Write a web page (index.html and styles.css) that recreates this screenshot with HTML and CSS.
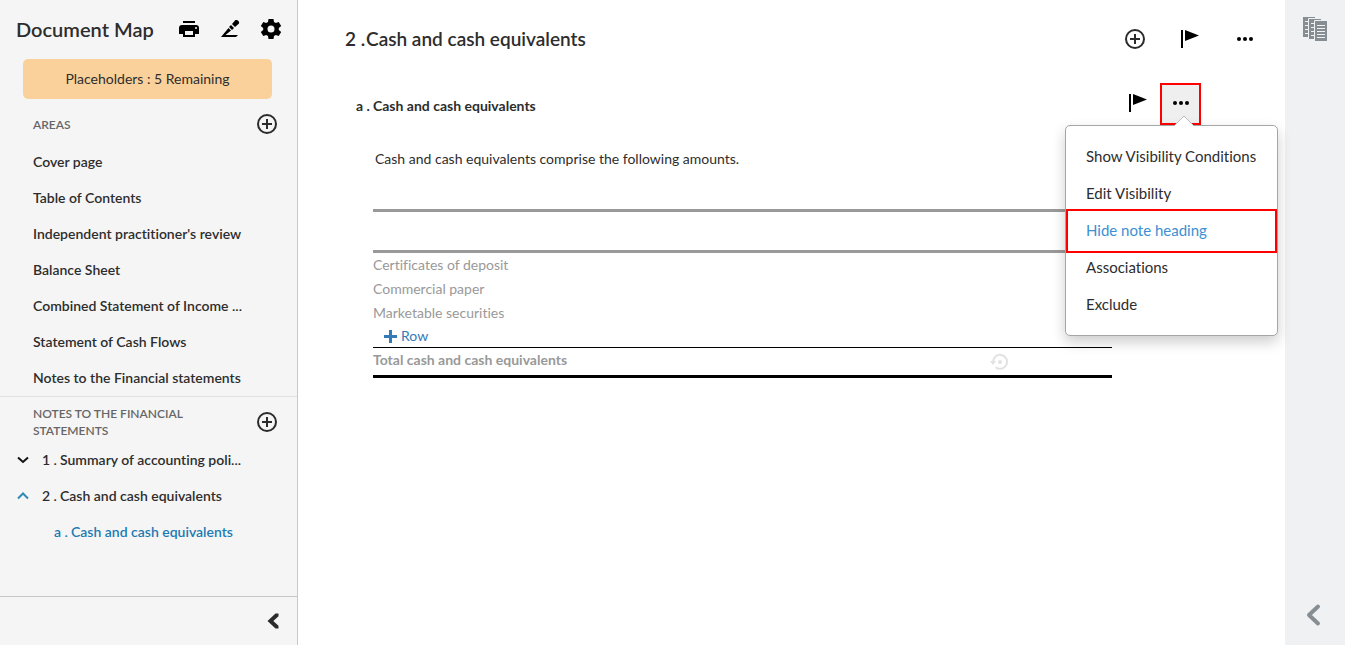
FILE: index.html
```html
<!DOCTYPE html>
<html lang="en">
<head>
<meta charset="utf-8">
<title>Document Map</title>
<link rel="stylesheet" href="styles.css">
</head>
<body>
<svg class="sprite" aria-hidden="true">
  <symbol id="plus" viewBox="0 0 24 24"><circle cx="12" cy="12" r="9" fill="none" stroke="#2b2b2b" stroke-width="2"/><path d="M12 7v10M7 12h10" stroke="#2b2b2b" stroke-width="2"/></symbol>
  <symbol id="flag" viewBox="0 0 18 18"><path d="M0 0h2v18H0zM4 0l14 5.500L4 11z"/></symbol>
  <symbol id="dots" viewBox="0 0 18 6"><circle cx="3" cy="3" r="2"/><circle cx="9" cy="3" r="2"/><circle cx="15" cy="3" r="2"/></symbol>
</svg>
<div class="app">
  <aside class="sidebar">
    <header class="map-head">
      <h1 class="map-title">Document Map</h1>
      <div class="map-tools">
        <button class="icon-btn" aria-label="Print"><svg width="24" height="24" viewBox="0 0 24 24"><path d="M6 4h12v2H6z"/><path fill-rule="evenodd" d="M5 8h14a3 3 0 0 1 3 3v6h-4v3H6v-3H2v-6a3 3 0 0 1 3-3zm3 6v4h8v-4zm11-4a1 1 0 1 0 0 2 1 1 0 0 0 0-2z"/></svg></button>
        <button class="icon-btn" aria-label="Sign"><svg width="24" height="24" viewBox="0 0 24 24"><path d="M3 20l7.500-9 2.500 2.500-5.500 4.500H20l-2 2zM11 10l2-2 3 3-2 2zM14 7l3-3.500c1-1.300 5 .5 4 3L17 10z"/></svg></button>
        <button class="icon-btn" aria-label="Settings"><svg width="24" height="24" viewBox="0 0 24 24"><path fill-rule="evenodd" d="M9.500 2h5l.5 3 1.800 1 2.900-1.100 2.500 4.200-2.400 1.900v2l2.400 1.900-2.500 4.200-2.900-1.100-1.800 1-.5 3h-5L9 19l-1.800-1-2.900 1.100-2.500-4.200L4.200 13v-2L1.800 9.100l2.500-4.200L7.200 6 9 5zM12 8.500a3.500 3.500 0 1 0 0 7 3.500 3.500 0 0 0 0-7z"/></svg></button>
      </div>
    </header>
    <button class="placeholders">Placeholders : 5 Remaining</button>
    <section class="areas">
      <div class="group-head">
        <h2 class="group-title">AREAS</h2>
        <button class="icon-btn" aria-label="Add area"><svg width="24" height="24"><use href="#plus"/></svg></button>
      </div>
      <nav class="area-list">
        <a class="nav-item" href="#">Cover page</a>
        <a class="nav-item" href="#">Table of Contents</a>
        <a class="nav-item" href="#">Independent practitioner's review</a>
        <a class="nav-item" href="#">Balance Sheet</a>
        <a class="nav-item" href="#">Combined Statement of Income ...</a>
        <a class="nav-item" href="#">Statement of Cash Flows</a>
        <a class="nav-item" href="#">Notes to the Financial statements</a>
      </nav>
    </section>
    <section class="notes">
      <div class="group-head group-head-tall">
        <h2 class="group-title">NOTES TO THE FINANCIAL STATEMENTS</h2>
        <button class="icon-btn" aria-label="Add note"><svg width="24" height="24"><use href="#plus"/></svg></button>
      </div>
      <nav class="note-list">
        <a class="note-item" href="#"><svg class="caret" width="12" height="8" viewBox="0 0 12 8"><path d="M1 1.500l5 4.500 5-4.500" fill="none" stroke="#111" stroke-width="2"/></svg><span class="num">1 .</span>Summary of accounting poli...</a>
        <a class="note-item" href="#"><svg class="caret" width="12" height="8" viewBox="0 0 12 8"><path d="M1 6.500l5-5 5 5" fill="none" stroke="#3089b3" stroke-width="2"/></svg><span class="num">2 .</span>Cash and cash equivalents</a>
        <a class="note-item note-child" href="#"><span class="num">a .</span>Cash and cash equivalents</a>
      </nav>
    </section>
    <footer class="map-foot">
      <button class="icon-btn" aria-label="Collapse map"><svg width="24" height="24" viewBox="0 0 24 24"><path d="M14.500 4.500h3v2.800L12.300 12l5.200 4.700v2.800h-3L6.500 12z" fill="#2b2b2b"/></svg></button>
    </footer>
  </aside>

  <main class="content">
    <div class="note-head">
      <h2 class="note-title"><span class="note-num">2 .</span>Cash and cash equivalents</h2>
      <div class="note-tools">
        <button class="tool" aria-label="Add"><svg width="24" height="24"><use href="#plus"/></svg></button>
        <button class="tool" aria-label="Flag"><svg width="18" height="18"><use href="#flag"/></svg></button>
        <button class="tool" aria-label="More"><svg width="18" height="6"><use href="#dots"/></svg></button>
      </div>
    </div>
    <div class="sub-head">
      <h3 class="sub-title"><span class="sub-num">a .</span>Cash and cash equivalents</h3>
      <div class="sub-tools">
        <button class="sub-flag" aria-label="Flag"><svg width="18" height="18"><use href="#flag"/></svg></button>
        <div class="more">
          <button class="more-btn" aria-label="More" aria-expanded="true"><svg width="18" height="6"><use href="#dots"/></svg></button>
          <svg class="pointer" width="20" height="11" viewBox="0 0 20 11"><path d="M0 11L10 1l10 10z" fill="#fff"/><path d="M0 11L10 1l10 10" fill="none" stroke="#bbb"/></svg>
          <div class="menu">
            <button class="menu-item">Show Visibility Conditions</button>
            <button class="menu-item">Edit Visibility</button>
            <button class="menu-item menu-current">Hide note heading</button>
            <button class="menu-item">Associations</button>
            <button class="menu-item">Exclude</button>
          </div>
        </div>
      </div>
    </div>
    <p class="lead">Cash and cash equivalents comprise the following amounts.</p>
    <table class="amounts">
      <thead><tr class="blank"><th></th><th></th></tr></thead>
      <tbody>
        <tr><td>Certificates of deposit</td><td></td></tr>
        <tr><td>Commercial paper</td><td></td></tr>
        <tr><td>Marketable securities</td><td></td></tr>
        <tr class="add"><td><button class="add-row"><svg width="13" height="13" viewBox="0 0 13 13"><path d="M5 0h3v5h5v3H8v5H5V8H0V5h5z"/></svg>Row</button></td><td></td></tr>
      </tbody>
      <tfoot><tr class="total"><th scope="row">Total cash and cash equivalents</th><td class="history"><svg width="18" height="18" viewBox="0 0 18 18"><path d="M3 9a7 7 0 1 1 2.500 5.200" fill="none" stroke="#e2e2e2" stroke-width="2"/><path d="M0 8h6l-3 4z" fill="#e2e2e2"/><circle cx="10" cy="9" r="2" fill="#e2e2e2"/></svg></td></tr></tfoot>
    </table>
  </main>

  <aside class="rail">
    <button class="icon-btn" aria-label="Documents"><svg width="24" height="24" viewBox="0 0 24 24"><g fill="#868e94" stroke="#eff1f3"><path d="M-.5-.5h13v21h-13z"/><path d="M5.500 1.500h13v21h-13z"/><path d="M11.500 3.500h13v21h-13z"/></g><path d="M2 4.500h3M2 8.500h3M2 12.500h3M2 16.500h3M8 6.500h3M8 10.500h3M8 14.500h3M8 18.500h3M14 8.500h8M14 11.500h8M14 14.500h8M14 17.500h8M14 20.500h8" stroke="#eff1f3"/></svg></button>
    <button class="icon-btn" aria-label="Expand panel"><svg width="24" height="24" viewBox="0 0 24 24"><path d="M15 3.500L6 12l9 8.500" fill="none" stroke="#868e94" stroke-width="4" stroke-linecap="round" stroke-linejoin="round"/></svg></button>
  </aside>
</div>
</body>
</html>
```

FILE: styles.css
```css
* { box-sizing: border-box; }
body {
  margin: 0;
  font: 14px/20px Lato, "Open Sans", sans-serif;
  font-variant-ligatures: none;
  color: #2d2d2d;
  background: #fff;
}
h1, h2, h3, p { margin: 0; }
button {
  padding: 0;
  border: 0;
  background: none;
  font: inherit;
  font-variant-ligatures: none;
  color: inherit;
  cursor: pointer;
}
a { color: inherit; text-decoration: none; }
svg { display: block; flex: none; }
.sprite { position: absolute; width: 0; height: 0; }
.app { display: flex; min-height: 100vh; }

.sidebar {
  flex: 0 0 298px;
  display: flex;
  flex-direction: column;
  background: #f5f5f5;
  border-right: 1px solid #c8c8c8;
}
.map-head {
  display: flex;
  align-items: center;
  justify-content: space-between;
  height: 59px;
  padding: 0 14px 2px 16px;
}
.map-title { font-size: 20px; font-weight: 600; line-height: 24px; }
.map-tools { display: flex; gap: 17px; }
.placeholders {
  height: 40px;
  margin: 0 25px 0 23px;
  border-radius: 5px;
  background: #fbd19b;
}
.group-head {
  display: flex;
  align-items: center;
  justify-content: space-between;
  height: 45px;
  padding: 5px 18px 0 33px;
}
.group-title {
  max-width: 180px;
  font-size: 12px;
  font-weight: 600;
  line-height: 17px;
  color: #666;
}
.nav-item, .note-item {
  display: flex;
  align-items: center;
  height: 36px;
  padding-left: 33px;
  font-weight: 600;
  white-space: nowrap;
}
.notes { border-top: 1px solid #e1e1e1; }
.notes .group-head { padding-top: 4px; }
.note-item { padding-left: 17px; }
.caret { margin-right: 13px; }
.num { width: 18px; }
.note-child { padding-left: 54px; color: #1c7ab2; }
.note-child .num { width: 17px; }
.map-foot {
  display: flex;
  align-items: center;
  justify-content: flex-end;
  height: 49px;
  margin-top: auto;
  padding-right: 12px;
  border-top: 1px solid #c8c8c8;
}

.content { flex: 1; min-width: 0; }
.note-head {
  display: flex;
  align-items: center;
  justify-content: space-between;
  height: 78px;
  padding: 0 13px 0 47px;
}
.note-title { display: flex; font-size: 19px; line-height: 24px; font-weight: 600; }
.note-num { width: 21px; }
.note-tools { display: flex; }
.tool { display: grid; place-items: center; width: 55px; height: 40px; }
.sub-head {
  display: flex;
  align-items: center;
  justify-content: space-between;
  height: 52px;
  padding: 0 84px 0 58px;
}
.sub-title { display: flex; padding-top: 4px; font-size: 14px; line-height: 20px; }
.sub-num { width: 17px; }
.sub-tools { display: flex; align-items: center; gap: 13px; }
.sub-flag { padding-bottom: 2px; }
.more { position: relative; }
.more-btn {
  display: grid;
  place-items: center;
  width: 41px;
  height: 42px;
  padding-bottom: 2px;
  border: 2px solid #f00;
  background: #efefef;
}
.pointer { position: absolute; z-index: 2; right: 7px; bottom: -1px; }
.menu {
  position: absolute;
  z-index: 1;
  top: 100%;
  right: -77px;
  width: 213px;
  padding: 12px 0;
  border: 1px solid #a6a6a6;
  border-radius: 5px;
  background: #fff;
  box-shadow: 0 6px 14px rgba(0, 0, 0, .2);
}
.menu-item {
  position: relative;
  display: block;
  width: 100%;
  height: 37px;
  padding: 0 0 2px 20px;
  font-size: 15px;
  text-align: left;
  white-space: nowrap;
}
.menu-current { color: #3b8fd3; }
.menu-current::after {
  content: "";
  position: absolute;
  inset: -3px 0 -4px;
  border: 2px solid #f00;
}
.lead { padding: 19px 77px 40px; }

.amounts {
  width: calc(100% - 248px);
  margin-left: 75px;
  border-collapse: separate;
  border-spacing: 0;
  color: #999;
}
.amounts th, .amounts td { padding: 0; height: 24px; text-align: left; }
.amounts .blank th {
  height: 44px;
  border-top: 3px solid #999;
  border-bottom: 3px solid #999;
}
.amounts .add td { height: 22px; }
.add-row {
  display: flex;
  align-items: center;
  gap: 4px;
  margin-left: 11px;
  color: #337ab7;
  fill: #337ab7;
}
.amounts .total th, .amounts .total td {
  height: 31px;
  padding-bottom: 3px;
  border-top: 1px solid #000;
  border-bottom: 3px solid #000;
}
.amounts .total .history { width: 122px; padding-bottom: 0; }

.rail {
  flex: 0 0 60px;
  display: flex;
  flex-direction: column;
  align-items: center;
  justify-content: space-between;
  padding: 17px 0 18px;
  background: #eff1f3;
}
```
